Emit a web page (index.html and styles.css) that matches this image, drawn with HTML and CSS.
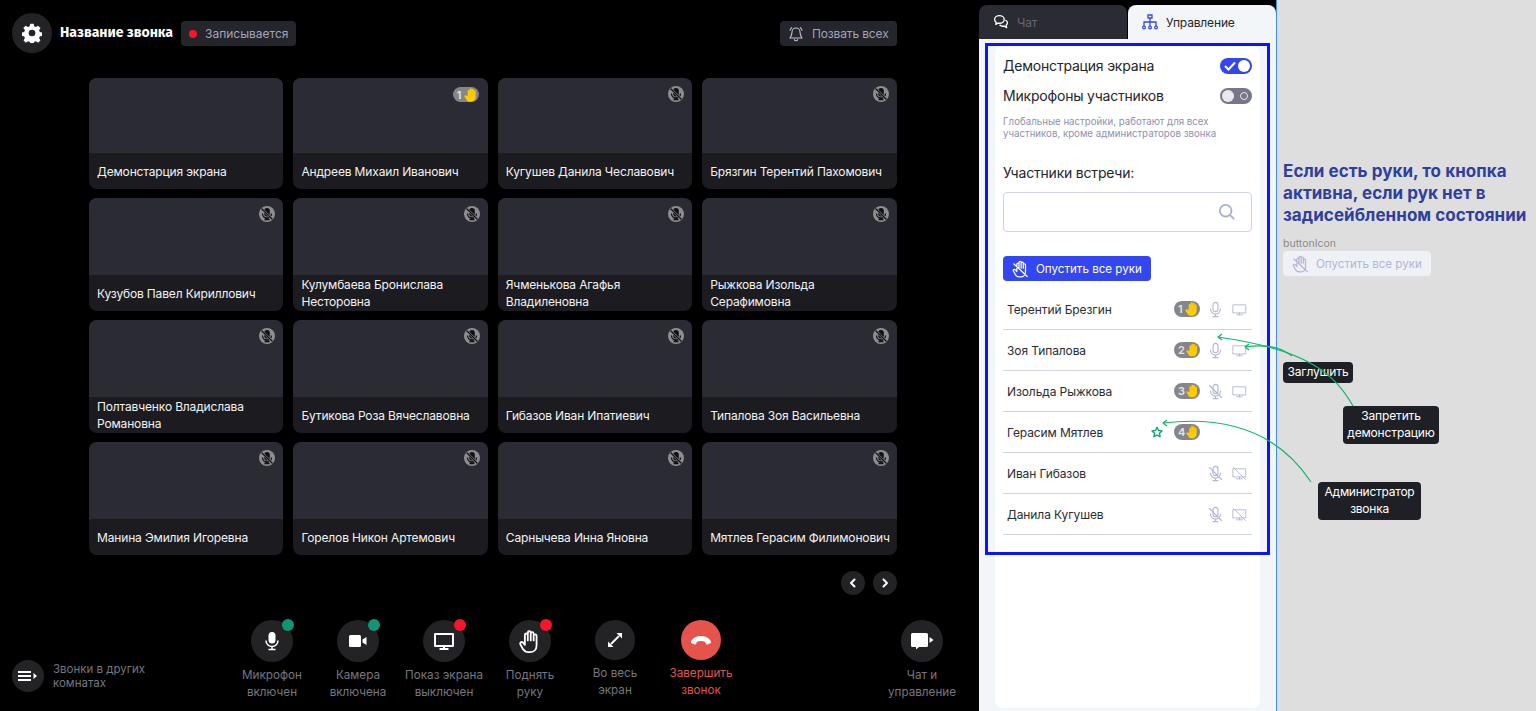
FILE: index.html
```html
<!DOCTYPE html>
<html lang="ru">
<head>
    <meta charset="UTF-8">
    <meta name="viewport" content="width=device-width, initial-scale=1.0">
    <title>Название звонка</title>
    <link rel="stylesheet" href="styles.css">
</head>
<body>

    <svg class="defs">
        <defs>
            <symbol id="hand" viewBox="0 0 24 24">
                <path d="M7 14V6.200a1.300 1.300 0 0 1 2.600 0V11M9.600 11V4.200a1.300 1.300 0 0 1 2.600 0V11M12.200 11V5a1.300 1.300 0 0 1 2.600 0v6M14.800 11V7a1.300 1.300 0 0 1 2.600 0v8.500c0 3.500-2.500 6-6 6h-1c-2.500 0-4-1-5.200-2.800L3 14.500c-.8-1.400 1.100-2.800 2.300-1.500L7 15" fill="none" stroke="currentColor" stroke-width="1.600" stroke-linecap="round" stroke-linejoin="round"/>
            </symbol>
            <symbol id="hand-down" viewBox="0 0 24 24">
                <path d="M7 14V6.200a1.300 1.300 0 0 1 2.600 0V11M9.600 11V4.200a1.300 1.300 0 0 1 2.600 0V11M12.200 11V5a1.300 1.300 0 0 1 2.600 0v6M14.800 11V7a1.300 1.300 0 0 1 2.600 0v8.500c0 3.500-2.500 6-6 6h-1c-2.500 0-4-1-5.200-2.800L3 14.500c-.8-1.400 1.100-2.800 2.300-1.500L7 15M3.500 6l16 15" fill="none" stroke="currentColor" stroke-width="1.500" stroke-linecap="round" stroke-linejoin="round"/>
            </symbol>
            <symbol id="hand-fill" viewBox="0 0 24 24">
                <path d="M7 13V6a1.500 1.500 0 0 1 3 0V3.500a1.500 1.500 0 0 1 3 0V4a1.500 1.500 0 0 1 3 0v2.500a1.500 1.500 0 0 1 3 0V15a7 7 0 0 1-7 7h-1.500c-2.500 0-4-1-5.200-3L2.300 14.500c-.8-1.500 1.200-2.700 2.300-1.400z" fill="#fc0"/>
                <path d="M10 5v7M13 4v8M16 5v7" stroke="#e3ad00" stroke-width=".5"/>
            </symbol>
            <symbol id="mic" viewBox="0 0 24 24">
                <rect x="8.500" y="2" width="7" height="13" rx="3.500" fill="none" stroke="currentColor" stroke-width="1.600"/>
                <path d="M5 11.500a7 7 0 0 0 14 0M12 18.500V22M8.500 22h7" fill="none" stroke="currentColor" stroke-width="1.600" stroke-linecap="round"/>
            </symbol>
            <symbol id="mic-off" viewBox="0 0 24 24">
                <rect x="8.500" y="2" width="7" height="13" rx="3.500" fill="none" stroke="currentColor" stroke-width="1.600"/>
                <path d="M5 11.500a7 7 0 0 0 14 0M12 18.500V22M8.500 22h7M3.500 3.500l17 17" fill="none" stroke="currentColor" stroke-width="1.600" stroke-linecap="round"/>
            </symbol>
            <symbol id="screen" viewBox="0 0 24 24">
                <path d="M2 4.500h20v13H2zM12 17.500v3M7.500 20.500h9" fill="none" stroke="currentColor" stroke-width="1.500" stroke-linejoin="round" stroke-linecap="round"/>
            </symbol>
            <symbol id="screen-off" viewBox="0 0 24 24">
                <path d="M2 4.500h20v13H2zM12 17.500v3M7.500 20.500h9M2.500 2.500l19 19" fill="none" stroke="currentColor" stroke-width="1.500" stroke-linejoin="round" stroke-linecap="round"/>
            </symbol>
            <symbol id="muted" viewBox="1 1 16 16">
                <circle cx="9" cy="9" r="8" fill="#8e8e92"/>
                <rect x="6.200" y="3" width="5.600" height="8.500" rx="2.800" fill="#111"/>
                <path d="M4.500 8.500a4.500 4.500 0 0 0 9 0M9 13v1.500M6.500 14.500h5" fill="none" stroke="#111" stroke-width="1.300"/>
                <path d="M3.500 3.500l11 11" stroke="#8e8e92" stroke-width="2.400"/>
                <path d="M3.500 3.500l11 11" stroke="#111" stroke-width="1.200"/>
            </symbol>
        </defs>
    </svg>

    <div class="call">
        <header class="call-head">
            <div class="round-btn round-btn-40">
                <svg width="20" height="20" viewBox="0 0 24 24"><path fill="#fff" fill-rule="evenodd" d="M10 1h4l.6 3 2.200.9 2.600-1.700 2.800 2.800-1.700 2.600.9 2.200 3 .6v4l-3 .6-.9 2.200 1.700 2.600-2.800 2.800-2.600-1.700-2.200.9-.6 3h-4l-.6-3-2.200-.9-2.600 1.700-2.800-2.800 1.700-2.600-.9-2.200-3-.6v-4l3-.6.9-2.200L1.600 6l2.800-2.800L7 4.900l2.200-.9zM12 8a4 4 0 1 0 0 8 4 4 0 0 0 0-8z"/></svg>
            </div>
            <span class="call-title">Название звонка</span>
            <span class="chip chip-rec"><i class="rec-dot"></i>Записывается</span>
            <span class="chip chip-call">
                <svg width="16" height="16" viewBox="0 0 24 24"><path d="M12 3a6 6 0 0 0-6 6c0 5-2 7-3 9h18c-1-2-3-4-3-9a6 6 0 0 0-6-6zM9.500 20.500a2.800 2.800 0 0 0 5 0M3 6.500C3.300 5 4 3.800 5.500 2.500M21 6.500C20.700 5 20 3.800 18.500 2.500" fill="none" stroke="#c6c6d4" stroke-width="1.600" stroke-linecap="round" stroke-linejoin="round"/></svg>
                Позвать всех
            </span>
        </header>

        <div class="tiles">
            <div class="tile"><div class="tile-video"></div><div class="tile-name">Демонстарция экрана</div></div>
            <div class="tile"><div class="tile-video"><span class="hand-badge"><b>1</b><svg width="16" height="16"><use href="#hand-fill"/></svg></span></div><div class="tile-name">Андреев Михаил Иванович</div></div>
            <div class="tile"><div class="tile-video"><svg class="tile-muted" width="16" height="16"><use href="#muted"/></svg></div><div class="tile-name">Кугушев Данила Чеславович</div></div>
            <div class="tile"><div class="tile-video"><svg class="tile-muted" width="16" height="16"><use href="#muted"/></svg></div><div class="tile-name">Брязгин Терентий Пахомович</div></div>

            <div class="tile"><div class="tile-video"><svg class="tile-muted" width="16" height="16"><use href="#muted"/></svg></div><div class="tile-name">Кузубов Павел Кириллович</div></div>
            <div class="tile"><div class="tile-video"><svg class="tile-muted" width="16" height="16"><use href="#muted"/></svg></div><div class="tile-name tile-name-two">Кулумбаева Бронислава Несторовна</div></div>
            <div class="tile"><div class="tile-video"><svg class="tile-muted" width="16" height="16"><use href="#muted"/></svg></div><div class="tile-name tile-name-two">Ячменькова Агафья Владиленовна</div></div>
            <div class="tile"><div class="tile-video"><svg class="tile-muted" width="16" height="16"><use href="#muted"/></svg></div><div class="tile-name tile-name-two">Рыжкова Изольда Серафимовна</div></div>

            <div class="tile"><div class="tile-video"><svg class="tile-muted" width="16" height="16"><use href="#muted"/></svg></div><div class="tile-name tile-name-two">Полтавченко Владислава Романовна</div></div>
            <div class="tile"><div class="tile-video"><svg class="tile-muted" width="16" height="16"><use href="#muted"/></svg></div><div class="tile-name">Бутикова Роза Вячеславовна</div></div>
            <div class="tile"><div class="tile-video"><svg class="tile-muted" width="16" height="16"><use href="#muted"/></svg></div><div class="tile-name">Гибазов Иван Ипатиевич</div></div>
            <div class="tile"><div class="tile-video"><svg class="tile-muted" width="16" height="16"><use href="#muted"/></svg></div><div class="tile-name">Типалова Зоя Васильевна</div></div>

            <div class="tile"><div class="tile-video"><svg class="tile-muted" width="16" height="16"><use href="#muted"/></svg></div><div class="tile-name">Манина Эмилия Игоревна</div></div>
            <div class="tile"><div class="tile-video"><svg class="tile-muted" width="16" height="16"><use href="#muted"/></svg></div><div class="tile-name">Горелов Никон Артемович</div></div>
            <div class="tile"><div class="tile-video"><svg class="tile-muted" width="16" height="16"><use href="#muted"/></svg></div><div class="tile-name">Сарнычева Инна Яновна</div></div>
            <div class="tile"><div class="tile-video"><svg class="tile-muted" width="16" height="16"><use href="#muted"/></svg></div><div class="tile-name">Мятлев Герасим Филимонович</div></div>
        </div>

        <div class="pager">
            <div class="round-btn round-btn-small"><svg width="12" height="12" viewBox="0 0 12 12"><path d="M7.500 2.500L4 6l3.500 3.500" fill="none" stroke="#fff" stroke-width="2" stroke-linecap="round" stroke-linejoin="round"/></svg></div>
            <div class="round-btn round-btn-small"><svg width="12" height="12" viewBox="0 0 12 12"><path d="M4.500 2.500L8 6 4.500 9.500" fill="none" stroke="#fff" stroke-width="2" stroke-linecap="round" stroke-linejoin="round"/></svg></div>
        </div>

        <footer class="controls">
            <div class="rooms">
                <div class="round-btn round-btn-rooms">
                    <svg width="20" height="12" viewBox="0 0 20 12"><path d="M0 2h13M0 6h13M0 10h13" stroke="#fff" stroke-width="2"/><path d="M15.500 3l3.500 3-3.500 3z" fill="#fff"/></svg>
                </div>
                <span>Звонки в других<br>комнатах</span>
            </div>

            <div class="control control-mic">
                <div class="round-btn"><i class="state state-on"></i>
                    <svg width="22" height="22" viewBox="0 0 22 22"><rect x="7.500" y="2" width="7" height="11.500" rx="3.500" fill="#fff"/><path d="M5 10.500a6 6 0 0 0 12 0M11 16.500V19M7.500 19.500h7" fill="none" stroke="#fff" stroke-width="1.500"/></svg>
                </div>
                <span>Микрофон<br>включен</span>
            </div>
            <div class="control">
                <div class="round-btn"><i class="state state-on"></i>
                    <svg width="22" height="22" viewBox="0 0 22 22"><rect x="2" y="5" width="12" height="12" rx="1.500" fill="#fff"/><path d="M15.500 9.500l4-2.500v8l-4-2.500z" fill="#fff"/></svg>
                </div>
                <span>Камера<br>включена</span>
            </div>
            <div class="control">
                <div class="round-btn"><i class="state state-off"></i>
                    <svg width="22" height="22" viewBox="0 0 22 22"><path d="M2 4h18v12H2z" fill="none" stroke="#fff" stroke-width="2" stroke-linejoin="round"/><path d="M11 16v2.500M6.500 19h9" stroke="#fff" stroke-width="2"/></svg>
                </div>
                <span>Показ экрана<br>выключен</span>
            </div>
            <div class="control">
                <div class="round-btn"><i class="state state-off"></i><svg class="white" width="27" height="27"><use href="#hand"/></svg></div>
                <span>Поднять<br>руку</span>
            </div>
            <div class="control control-full">
                <div class="round-btn round-btn-40"><svg width="18" height="18" viewBox="0 0 18 18"><path d="M10.500 2H16v5.500zM7.500 16H2v-5.500z" fill="#fff"/><path d="M13 5L5 13" stroke="#fff" stroke-width="2"/></svg></div>
                <span>Во весь<br>экран</span>
            </div>
            <div class="control control-end">
                <div class="round-btn round-btn-40 round-btn-red"><svg width="22" height="12" viewBox="0 0 22 12"><path d="M1 7.500C3 3.500 7 2 11 2s8 1.500 10 5.500c.3.700 0 1.500-.7 1.800l-2.800 1.200c-.6.200-1.200 0-1.500-.5l-1-2.200c-2.500-1-5.500-1-8 0L6 10c-.3.500-.9.700-1.500.5L1.700 9.300C1 9 .7 8.200 1 7.500z" fill="#fff"/></svg></div>
                <span>Завершить<br>звонок</span>
            </div>
            <div class="control control-chat">
                <div class="round-btn"><svg width="24" height="20" viewBox="0 0 24 20"><path d="M2.500 2h14A1.500 1.500 0 0 1 18 3.500v11a1.500 1.500 0 0 1-1.500 1.500H9l-3 2.500V16H2.500A1.500 1.500 0 0 1 1 14.500v-11A1.500 1.500 0 0 1 2.500 2z" fill="#fff"/><path d="M19.500 6l4 3-4 3z" fill="#fff"/></svg></div>
                <span>Чат и<br>управление</span>
            </div>
        </footer>
    </div>

    <aside class="panel">
        <div class="tabs">
            <div class="tab tab-chat">
                <svg width="16" height="16" viewBox="0 0 20 20"><path d="M8 2c3.300 0 6 2.100 6 4.800s-2.700 4.800-6 4.800c-.7 0-1.300-.1-1.900-.2L3.500 13l.5-2.700C2.800 9.400 2 8.200 2 6.800 2 4.100 4.700 2 8 2z" fill="none" stroke="#fff" stroke-width="1.700" stroke-linejoin="round"/><path d="M15.500 7.500c1.500.8 2.500 2 2.500 3.500 0 1.100-.5 2-1.400 2.800l.4 3.200-3-2c-2 .5-4.500 0-5.800-1.500" fill="none" stroke="#fff" stroke-width="1.700" stroke-linejoin="round"/></svg>
                Чат
            </div>
            <div class="tab tab-manage">
                <svg width="16" height="16" viewBox="0 0 16 16"><path d="M6 1h4v3H6zM8 4v3.500M2 12V8h12v4M8 8v4" fill="none" stroke="#3347f0" stroke-width="1.300"/><circle cx="2" cy="13.500" r="1.400" fill="none" stroke="#3347f0" stroke-width="1.200"/><circle cx="8" cy="13.500" r="1.400" fill="none" stroke="#3347f0" stroke-width="1.200"/><circle cx="14" cy="13.500" r="1.400" fill="none" stroke="#3347f0" stroke-width="1.200"/></svg>
                Управление
            </div>
        </div>

        <div class="panel-body">
            <div class="card">
                <div class="setting">
                    <span class="setting-name">Демонстрация экрана</span>
                    <span class="toggle toggle-on">
                        <svg width="12" height="10" viewBox="0 0 12 10"><path d="M1 5l3.500 3.500L11 1.500" fill="none" stroke="#fff" stroke-width="2"/></svg>
                        <i></i>
                    </span>
                </div>
                <div class="setting setting-second">
                    <span class="setting-name">Микрофоны участников</span>
                    <span class="toggle toggle-off"><i></i><em></em></span>
                </div>
                <p class="hint">Глобальные настройки, работают для всех участников, кроме администраторов звонка</p>

                <h3 class="members-title">Участники встречи:</h3>
                <div class="search">
                    <svg width="18" height="18" viewBox="0 0 20 20"><circle cx="8.500" cy="8.500" r="6.500" fill="none" stroke="#a9b0cf" stroke-width="2"/><path d="M13.500 13.500L18 18" stroke="#a9b0cf" stroke-width="2"/></svg>
                </div>

                <button type="button" class="btn"><svg width="20" height="20"><use href="#hand-down"/></svg>Опустить все руки</button>

                <ul class="members">
                    <li><span class="member-name">Терентий Брезгин</span>
                        <span class="member-badge"><b>1</b><svg width="16" height="16"><use href="#hand-fill"/></svg></span>
                        <svg class="ico-mic" width="17" height="17"><use href="#mic"/></svg>
                        <svg class="ico-screen" width="15" height="15"><use href="#screen"/></svg></li>
                    <li><span class="member-name">Зоя Типалова</span>
                        <span class="member-badge"><b>2</b><svg width="16" height="16"><use href="#hand-fill"/></svg></span>
                        <svg class="ico-mic" width="17" height="17"><use href="#mic"/></svg>
                        <svg class="ico-screen" width="15" height="15"><use href="#screen"/></svg></li>
                    <li><span class="member-name">Изольда Рыжкова</span>
                        <span class="member-badge"><b>3</b><svg width="16" height="16"><use href="#hand-fill"/></svg></span>
                        <svg class="ico-mic" width="17" height="17"><use href="#mic-off"/></svg>
                        <svg class="ico-screen" width="15" height="15"><use href="#screen"/></svg></li>
                    <li><span class="member-name">Герасим Мятлев</span>
                        <svg class="star" width="12" height="12" viewBox="0 0 24 24"><path d="M12 2.500l3 6.400 7 .9-5.100 4.800 1.300 6.900-6.200-3.400-6.200 3.400 1.300-6.900L2 9.800l7-.9z" fill="none" stroke="#12a66a" stroke-width="2.800" stroke-linejoin="round"/></svg>
                        <span class="member-badge member-badge-last"><b>4</b><svg width="16" height="16"><use href="#hand-fill"/></svg></span></li>
                    <li><span class="member-name">Иван Гибазов</span>
                        <svg class="ico-mic" width="17" height="17"><use href="#mic-off"/></svg>
                        <svg class="ico-screen" width="15" height="15"><use href="#screen-off"/></svg></li>
                    <li><span class="member-name">Данила Кугушев</span>
                        <svg class="ico-mic" width="17" height="17"><use href="#mic-off"/></svg>
                        <svg class="ico-screen" width="15" height="15"><use href="#screen-off"/></svg></li>
                </ul>
            </div>
        </div>
    </aside>

    <section class="notes">
        <h2>Если есть руки, то кнопка активна, если рук нет в задисейбленном состоянии</h2>
        <div class="notes-label">buttonIcon</div>
        <button type="button" class="btn btn-disabled"><svg width="20" height="20"><use href="#hand-down"/></svg>Опустить все руки</button>
    </section>

    <!-- аннотации поверх макета -->
    <div class="frame"></div>
    <div class="tip tip-mute">Заглушить</div>
    <div class="tip tip-demo">Запретить<br>демонстрацию</div>
    <div class="tip tip-admin">Администратор<br>звонка</div>
    <svg class="arrows" width="1536" height="711" viewBox="0 0 1536 711">
        <g fill="none" stroke="#12b76a" stroke-width="1.200">
            <path d="M1353 406C1335 375 1310 350 1218 337M1222 334l-4 3 4 3"/>
            <path d="M1292 356C1280 346 1265 344 1245 347M1249 344l-4 3 4 3"/>
            <path d="M1311 482C1280 435 1230 415 1163 423M1167 420l-4 3 4 3"/>
        </g>
    </svg>

</body>
</html>
```

FILE: styles.css
```css
* {
    box-sizing: border-box;
}
html, body {
    height: 711px;
    overflow: hidden;
}
body {
    margin: 0;
    display: flex;
    position: relative;
    font-family: 'Inter', 'Liberation Sans', sans-serif;
    background: #000;
}
.defs {
    display: none;
}
.white {
    color: #fff;
}

/* левая часть, сам звонок */
.call {
    width: 979px;
    flex: none;
    height: 711px;
    display: flex;
    flex-direction: column;
    background: #000;
    color: #fff;
}
.call-head {
    display: flex;
    align-items: flex-start;
    padding: 13px 82px 0 12px;
    height: 78px;
}
.round-btn {
    width: 42px;
    height: 42px;
    border-radius: 50%;
    background: #232326;
    display: flex;
    align-items: center;
    justify-content: center;
    position: relative;
}
.round-btn-40 {
    width: 40px;
    height: 40px;
}
.round-btn-red {
    background: #e5534b;
}
.round-btn-small {
    width: 24px;
    height: 24px;
}
.round-btn-rooms {
    width: 32px;
    height: 32px;
}
.call-title {
    font-family: 'Fira Sans', 'Noto Sans', sans-serif;
    font-weight: 700;
    font-size: 14px;
    margin: 11px 8px 0 8px;
    line-height: 17px;
}
.chip {
    display: flex;
    align-items: center;
    height: 25px;
    margin-top: 8px;
    background: #25252c;
    border-radius: 4px;
    font-size: 12px;
    color: #a3a3b8;
}
.chip-rec {
    width: 115px;
    padding-left: 8px;
}
.rec-dot {
    width: 8px;
    height: 8px;
    border-radius: 50%;
    background: #f5162c;
    margin-right: 8px;
}
.chip-call {
    width: 117px;
    margin-left: auto;
    padding-left: 8px;
    gap: 8px;
    letter-spacing: -.15px;
}

/* плитки */
.tiles {
    margin-left: 89px;
    width: 808px;
    display: grid;
    grid-template-columns: repeat(4, 194.4px);
    grid-template-rows: 111px 113px 113px 113px;
    column-gap: 10px;
    row-gap: 9px;
}
.tile {
    display: flex;
    flex-direction: column;
    border-radius: 8px;
    overflow: hidden;
    background: #1c1c20;
}
.tile-video {
    flex: 1;
    background: #2a2b33;
    position: relative;
}
.tile-name {
    height: 36px;
    padding: 1px 4px 0 8px;
    font-size: 12px;
    letter-spacing: -.15px;
    line-height: 17px;
    color: #f2f2f2;
    display: flex;
    align-items: center;
}
.tile-name-two {
    padding-top: 0;
}
.tile-muted {
    position: absolute;
    top: 8px;
    right: 8px;
}
.hand-badge {
    position: absolute;
    top: 9px;
    right: 9px;
    width: 26px;
    height: 15px;
    border-radius: 8px;
    background: #85858c;
    display: flex;
    align-items: center;
    justify-content: space-between;
    font-size: 11px;
    padding-left: 4px;
}
.hand-badge b, .member-badge b {
    font-weight: 600;
    color: #e4e4e4;
}

.pager {
    display: flex;
    justify-content: flex-end;
    gap: 8px;
    margin: 16px 82px 0 0;
}

/* нижняя панель */
.controls {
    display: flex;
    margin-top: 25px;
    height: 90px;
    font-size: 11.7px;
    line-height: 17px;
    color: #77777f;
    text-align: center;
}
.rooms {
    display: flex;
    align-items: center;
    gap: 9px;
    margin: 40px 0 0 12px;
    height: 32px;
    text-align: left;
    line-height: 14px;
    width: 239px;
    flex: none;
    font-size: 11.5px;
}
.control {
    display: flex;
    flex-direction: column;
    align-items: center;
    flex: none;
    width: 86px;
}
.control span {
    margin-top: 5px;
}
.state {
    position: absolute;
    top: -1px;
    right: -1px;
    width: 12px;
    height: 12px;
    border-radius: 50%;
}
.state-on {
    background: #109676;
}
.state-off {
    background: #f5162c;
}
.control-mic {
    margin-left: -22px;
}
.control-full {
    margin-left: -1px;
}
.control-end {
    color: #e5534b;
}
.control-chat {
    margin-left: 135px;
}

/* правая панель */
.panel {
    width: 298px;
    flex: none;
    height: 711px;
    padding-top: 5px;
    border-right: 1px solid #3f8cff;
    background: #000;
    display: flex;
    flex-direction: column;
}
.tabs {
    display: flex;
    gap: 1px;
    height: 34px;
    flex: none;
    font-size: 12px;
    letter-spacing: -.15px;
}
.tab {
    flex: 1;
    display: flex;
    align-items: center;
    border-radius: 8px 8px 0 0;
    gap: 8px;
    padding-left: 14px;
}
.tab-chat {
    background: #2a2b33;
    color: #66666f;
}
.tab-manage {
    background: #f3f6f9;
    color: #24242c;
}
.panel-body {
    flex: 1;
    background: #f3f6f9;
    padding: 7px 16px 3px;
    display: flex;
}
.card {
    flex: 1;
    background: #fff;
    border-radius: 8px;
    padding: 11px 8px 0;
}
.setting {
    display: flex;
    justify-content: space-between;
    align-items: center;
    height: 18px;
    font-size: 14px;
    letter-spacing: -.2px;
    color: #24242c;
}
.setting-name {
    padding-bottom: 2px;
}
.setting-second {
    margin-top: 12px;
}
.toggle {
    width: 32px;
    height: 16px;
    border-radius: 8px;
    display: flex;
    align-items: center;
    justify-content: space-between;
    padding: 0 2px 0 4px;
}
.toggle-on {
    background: #3347f0;
}
.toggle-on i {
    width: 12px;
    height: 12px;
    border-radius: 50%;
    background: #fff;
}
.toggle-off {
    background: #77768a;
    padding: 0 4px 0 2px;
}
.toggle-off i {
    width: 12px;
    height: 12px;
    border-radius: 50%;
    background: #e9e9ee;
}
.toggle-off em {
    width: 8px;
    height: 8px;
    border-radius: 50%;
    border: 1px solid #e9e9ee;
}
.hint {
    margin: 11px 0 0;
    font-size: 9.7px;
    line-height: 12px;
    color: #8f8fb0;
}
.members-title {
    margin: 24px 0 0;
    font-weight: 400;
    font-size: 14px;
    letter-spacing: -.2px;
    line-height: 18px;
    color: #24242c;
}
.search {
    margin-top: 10px;
    height: 40px;
    border: 1px solid #cfd4dc;
    border-radius: 4px;
    display: flex;
    align-items: center;
    justify-content: flex-end;
    padding-right: 15px;
}
.btn {
    display: flex;
    align-items: center;
    gap: 5px;
    width: 148px;
    height: 25px;
    margin-top: 24px;
    padding: 0 0 0 8px;
    background: #3347f0;
    color: #fff;
    border: none;
    border-radius: 4px;
    font-family: inherit;
    font-size: 11.6px;
}
.btn-disabled {
    background: #eef1f5;
    color: #b3b7d4;
    margin-top: 1px;
}
.members {
    list-style: none;
    margin: 8px 0 0;
    padding: 0;
}
.members li {
    height: 41px;
    border-bottom: 1px solid #cfd4dc;
    display: flex;
    align-items: center;
    padding: 0 5px 0 4px;
    font-size: 12px;
    letter-spacing: -.1px;
    color: #2b2b33;
}
.member-name {
    margin-right: auto;
}
.member-badge {
    width: 26px;
    height: 16px;
    border-radius: 8px;
    background: #85858c;
    display: flex;
    align-items: center;
    justify-content: space-between;
    font-size: 11px;
    padding-left: 4px;
    margin-right: 7px;
}
.member-badge-last {
    margin-right: 47px;
}
.star {
    margin-right: 11px;
}
.ico-mic, .ico-screen {
    color: #b3b7d4;
}
.ico-screen {
    margin-left: 8px;
}

/* заметки справа */
.notes {
    flex: 1;
    background: #dedede;
    padding: 160px 0 0 6px;
}
.notes h2 {
    margin: 0;
    font-weight: 700;
    font-size: 17px;
    letter-spacing: .05px;
    line-height: 22px;
    color: #2f3f9e;
    width: 250px;
}
.notes-label {
    margin-top: 12px;
    font-size: 10.5px;
    line-height: 12px;
    color: #8b8b8b;
}

/* аннотации */
.frame {
    position: absolute;
    left: 985px;
    top: 43px;
    width: 285px;
    height: 512px;
    border: 3px solid #0a14ff;
    pointer-events: none;
}
.tip {
    position: absolute;
    background: #1f1f26;
    color: #fff;
    border-radius: 4px;
    font-size: 12px;
    letter-spacing: -.15px;
    line-height: 17px;
    text-align: center;
    padding-top: 1px;
}
.tip-mute {
    left: 1283px;
    top: 362px;
    width: 70px;
    height: 21px;
}
.tip-demo {
    left: 1343px;
    top: 406px;
    width: 96px;
    height: 38px;
}
.tip-admin {
    left: 1318px;
    top: 482px;
    width: 103px;
    height: 38px;
    letter-spacing: -.25px;
}
.arrows {
    position: absolute;
    left: 0;
    top: 0;
    pointer-events: none;
}
```
